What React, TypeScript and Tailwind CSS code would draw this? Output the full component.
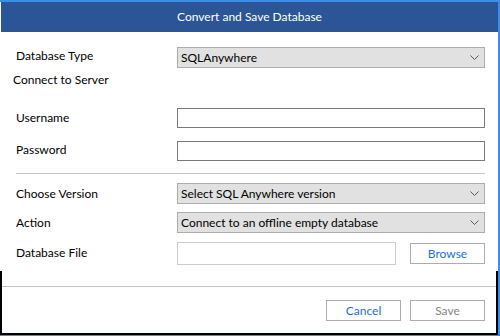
import React from 'react';

const Chevron: React.FC = () => (
  <svg width="9" height="5" viewBox="0 0 9 5" className="shrink-0">
    <path d="M0.5 0.5 L4.5 4.5 L8.5 0.5" fill="none" stroke="#5a5a5a" strokeWidth="1" />
  </svg>
);

const Select: React.FC<{ value: string }> = ({ value }) => (
  <div className="w-[308px] h-[21px] bg-[#e1e1e1] border border-[#adadad] flex items-center justify-between pl-[3px] pr-[5px] text-black">
    <span>{value}</span>
    <Chevron />
  </div>
);

const Label: React.FC<{ text: string }> = ({ text }) => (
  <div className="w-[161px] shrink-0 text-black">{text}</div>
);

export default function App() {
  return (
    <div
      className="w-[500px] h-[336px] bg-white border-t-2 border-r-2 border-b border-[#3a8ee6] flex flex-col text-[12px] leading-[16px]"
      style={{ fontFamily: 'Lato, "Noto Sans", sans-serif' }}
    >
      <div className="ml-px h-[30px] bg-[#2b5597] text-white flex items-center justify-center shrink-0">
        Convert and Save Database
      </div>

      <div className="pl-4 pr-[13px] flex flex-col">
        <div className="mt-[15px] flex items-center">
          <div className="w-[161px] shrink-0 -mt-[4px]">Database Type</div>
          <Select value="SQLAnywhere" />
        </div>

        <div className="mt-[4px] -ml-[3px]">Connect to Server</div>

        <div className="mt-[20px] flex items-center">
          <div className="w-[161px] shrink-0 -mt-[1px]">Username</div>
          <div className="w-[308px] h-[20px] border border-[#7a7a7a]" />
        </div>

        <div className="mt-[13px] flex items-center">
          <div className="w-[161px] shrink-0 -mt-[3px]">Password</div>
          <div className="w-[308px] h-[20px] border border-[#7a7a7a]" />
        </div>

        <div className="mt-[12px] h-px bg-[#c4c4c4]" />

        <div className="mt-[9px] flex items-center">
          <Label text="Choose Version" />
          <Select value="Select SQL Anywhere version" />
        </div>

        <div className="mt-[8px] flex items-center">
          <Label text="Action" />
          <Select value="Connect to an offline empty database" />
        </div>

        <div className="mt-[9px] flex items-center">
          <div className="w-[161px] shrink-0 -mt-[2px]">Database File</div>
          <div className="w-[219px] h-[23px] border border-[#cccccc]" />
          <button className="ml-[14px] w-[75px] h-[21px] border border-[#adadad] bg-white text-[#1a6fd8] flex items-center justify-center">
            Browse
          </button>
        </div>
      </div>

      <div className="mt-[6px] flex-1 border-l-2 border-r-2 border-b-2 border-black flex flex-col">
        <div className="mt-[15px] h-px bg-[#c4c4c4]" />
        <div className="mt-[13px] flex justify-end gap-[9px] pr-[11px]">
          <button className="w-[75px] h-[21px] border border-[#adadad] bg-white text-[#1a6fd8] flex items-center justify-center">
            Cancel
          </button>
          <button className="w-[75px] h-[21px] border border-[#adadad] bg-white text-[#838383] flex items-center justify-center">
            Save
          </button>
        </div>
      </div>
    </div>
  );
}
